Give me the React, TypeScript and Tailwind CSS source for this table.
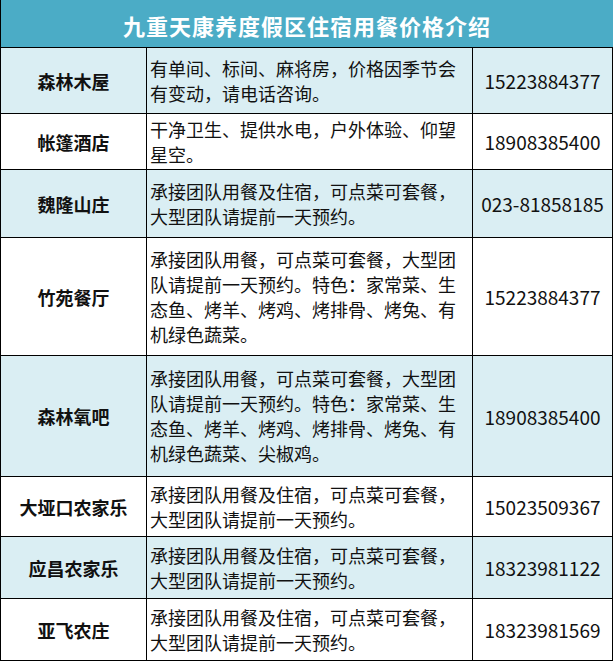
import React from "react";

const rows = [
  { name: "森林木屋", desc: ["有单间、标间、麻将房，价格因季节会", "有变动，请电话咨询。"], phone: "15223884377", h: "h-[66px]", blue: true },
  { name: "帐篷酒店", desc: ["干净卫生、提供水电，户外体验、仰望", "星空。"], phone: "18908385400", h: "h-[56px]", blue: false },
  { name: "魏隆山庄", desc: ["承接团队用餐及住宿，可点菜可套餐，", "大型团队请提前一天预约。"], phone: "023-81858185", h: "h-[68px]", blue: true },
  { name: "竹苑餐厅", desc: ["承接团队用餐，可点菜可套餐，大型团", "队请提前一天预约。特色：家常菜、生", "态鱼、烤羊、烤鸡、烤排骨、烤兔、有", "机绿色蔬菜。"], phone: "15223884377", h: "h-[118px]", blue: false },
  { name: "森林氧吧", desc: ["承接团队用餐，可点菜可套餐，大型团", "队请提前一天预约。特色：家常菜、生", "态鱼、烤羊、烤鸡、烤排骨、烤兔、有", "机绿色蔬菜、尖椒鸡。"], phone: "18908385400", h: "h-[121px]", blue: true },
  { name: "大垭口农家乐", desc: ["承接团队用餐及住宿，可点菜可套餐，", "大型团队请提前一天预约。"], phone: "15023509367", h: "h-[60px]", blue: false },
  { name: "应昌农家乐", desc: ["承接团队用餐及住宿，可点菜可套餐，", "大型团队请提前一天预约。"], phone: "18323981122", h: "h-[62px]", blue: true },
  { name: "亚飞农庄", desc: ["承接团队用餐及住宿，可点菜可套餐，", "大型团队请提前一天预约。"], phone: "18323981569", h: "h-[62px]", blue: false },
];

export default function App() {
  return (
    <div
      className="w-[614px] h-[662px] bg-white"
      style={{ fontFamily: '"Noto Sans CJK SC", "Noto Sans", sans-serif' }}
    >
      <div className="w-[613px] border-l border-black">
        <div className="h-[48px] bg-[#4bacc6] border-b border-black flex items-center justify-center pt-[2px]">
          <span className="text-white font-bold text-[22px] leading-none tracking-[1px]">
            九重天康养度假区住宿用餐价格介绍
          </span>
        </div>
        {rows.map((r, i) => (
          <div
            key={i}
            className={`${r.h} grid grid-cols-[146px_326px_1fr] border-b border-r border-black text-[#111111] ${
              r.blue ? "bg-[#daeef3]" : "bg-white"
            }`}
          >
            <div className="border-r border-black flex items-center justify-center font-bold text-[18px] leading-none">
              {r.name}
            </div>
            <div className="border-r border-black flex flex-col justify-center pl-[3px] text-[18px] leading-[25px] whitespace-nowrap">
              {r.desc.map((d, j) => (
                <div key={j}>{d}</div>
              ))}
            </div>
            <div className="flex items-center justify-center text-[19px] leading-none">
              {r.phone}
            </div>
          </div>
        ))}
      </div>
    </div>
  );
}
